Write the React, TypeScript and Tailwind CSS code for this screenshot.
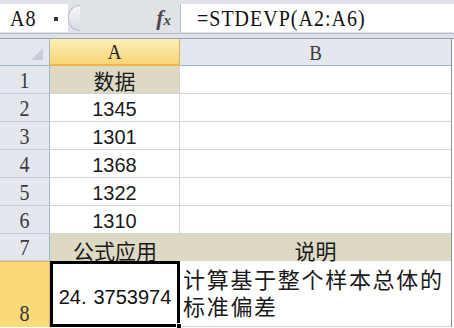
const serif = "font-['Liberation_Serif',serif]";
const sans = "font-['Liberation_Sans','Noto_Sans_CJK_SC',sans-serif]";
const cjk = "font-['Noto_Sans_CJK_SC',sans-serif]";

const rows = [
  { n: 1, a: "数据", head: true },
  { n: 2, a: "1345" },
  { n: 3, a: "1301" },
  { n: 4, a: "1368" },
  { n: 5, a: "1322" },
  { n: 6, a: "1310" },
];

const RowHead = ({ n }: { n: number }) => (
  <div className="flex items-center justify-center border-r border-b border-r-[#9eb6ce] border-b-[#c4ccd6] bg-[#e4e8ee] text-[#3c3c3c]">
    <span className={`${serif} inline-block scale-y-[1.15] text-[20px] leading-none`}>{n}</span>
  </div>
);

export default function App() {
  return (
    <div className="h-[328px] w-[454px] overflow-hidden bg-white">
      {/* formula bar */}
      <div className="flex h-[39px] flex-col bg-[#dfe3e8]">
        <div className="mt-[4px] flex h-[28px]">
          <div className="flex w-[68px] items-center justify-between bg-white pl-[10px] pr-[10px]">
            <span className={`${serif} inline-block scale-y-[1.15] text-[20px] leading-none tracking-[1px] text-[#111]`}>A8</span>
            <span className="mt-[2px] h-[4px] w-[4px] bg-[#333]" />
          </div>
          <div className="flex w-[112px] items-center">
            <div className="h-[26px] w-[12px] rounded-l-full border border-r-0 border-[#b9bec6] bg-gradient-to-b from-[#f6f7f9] to-[#d8dce2]" />
            <div className="flex-1" />
            <span className={`${serif} mr-[9px] text-[22px] leading-none font-bold italic text-[#4a4a4a]`}>
              f<span className="text-[15px]">x</span>
            </span>
          </div>
          <div className="flex flex-1 items-center border-l border-[#b9bec6] bg-white pl-[16px]">
            <span className={`${serif} inline-block scale-y-[1.15] text-[20px] leading-none tracking-[1px] text-[#111]`}>
              =STDEVP(A2:A6)
            </span>
          </div>
        </div>
        <div className="mt-[1px] h-[1px] bg-[#b9bec6]" />
        <div className="flex-1" />
        <div className="h-[1px] bg-[#9aa3ad]" />
      </div>

      {/* sheet */}
      <div className="grid w-[452px] grid-cols-[50px_130px_1fr] grid-rows-[27px_repeat(6,28px)_27px_66px] border-r border-[#8a929c]">
        <div className="relative border-r border-b border-[#9eb6ce] bg-[#e4e8ee]">
          <div className="absolute right-[6px] bottom-[5px] h-0 w-0 border-b-[12px] border-l-[12px] border-b-[#c9ced6] border-l-transparent" />
        </div>
        <div className="flex items-center justify-center border-r border-b-2 border-r-[#e3b45a] border-b-[#f1b544] bg-gradient-to-b from-[#fdeeb9] to-[#f8d574]">
          <span className={`${serif} inline-block scale-y-[1.15] text-[19px] leading-none text-[#222]`}>A</span>
        </div>
        <div className="flex items-center justify-center border-b border-[#9eb6ce] bg-[#e4e8ee]">
          <span className={`${serif} inline-block scale-y-[1.15] text-[19px] leading-none text-[#3c3c3c]`}>B</span>
        </div>

        {rows.map((r) => (
          <div key={r.n} className="contents">
            <RowHead n={r.n} />
            <div
              className={`flex justify-center border-r border-b border-[#d4d4d4] text-[20px] leading-none text-[#1a1a1a] ${
                r.head ? `${cjk} items-end bg-[#ddd9c4] pb-[2px] text-[21px]` : `${sans} items-center pt-[2px]`
              }`}
            >
              {r.a}
            </div>
            <div className="border-b border-[#d4d4d4]" />
          </div>
        ))}

        <RowHead n={7} />
        <div className={`${cjk} flex items-end justify-center bg-[#ddd9c4] text-[21px] leading-none text-[#1a1a1a]`}>
          公式应用
        </div>
        <div className={`${cjk} flex items-end justify-center bg-[#ddd9c4] text-[21px] leading-none text-[#1a1a1a]`}>
          说明
        </div>

        <div className="flex items-end justify-center border-t border-r border-t-[#e3b45a] border-r-[#e3b45a] bg-[#f9d979] pb-[4px] text-[#333]">
          <span className={`${serif} inline-block scale-y-[1.15] text-[20px] leading-none`}>8</span>
        </div>
        <div className="relative flex items-center justify-center border-[3px] border-black bg-white pt-[6px]">
          <span className={`${sans} text-[20px] leading-none text-[#111]`}>
            24.<span className="ml-[7px]">3753974</span>
          </span>
          <div className="absolute right-[-5px] bottom-[-5px] h-[6px] w-[6px] border border-white bg-black" />
        </div>
        <div className={`${cjk} flex flex-col justify-center border-b border-[#d4d4d4] pb-[4px] pl-[3px] text-[22px] leading-[27px] tracking-[1.7px] text-[#1a1a1a]`}>
          <div>计算基于整个样本总体的</div>
          <div>标准偏差</div>
        </div>
      </div>
    </div>
  );
}
